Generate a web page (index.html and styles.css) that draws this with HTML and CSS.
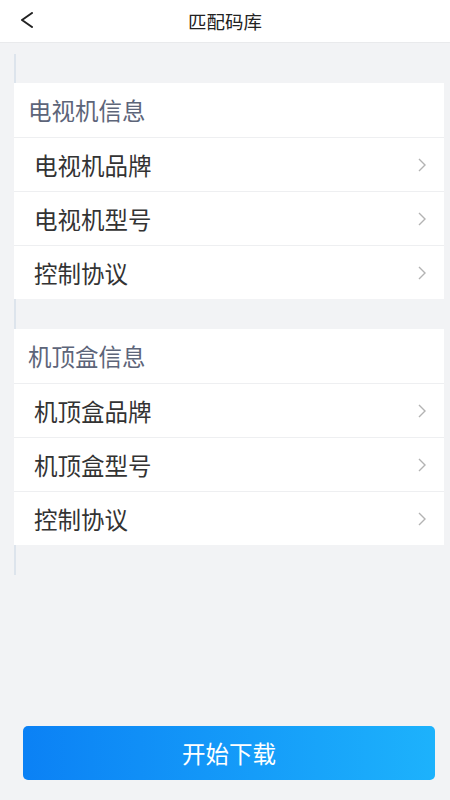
FILE: index.html
```html
<!DOCTYPE html>
<html lang="zh-CN">
  <head>
    <meta charset="UTF-8" />
    <meta name="viewport" content="width=device-width, initial-scale=1.0" />
    <title>匹配码库</title>
    <link rel="stylesheet" href="styles.css">
  </head>
  <body>
    <div class="page">
      <div class="topbar">
        <span class="back">
          <svg width="14" height="16" viewBox="0 0 14 16"><path d="M12 1 L2 8 L12 15" fill="none" stroke="#222" stroke-width="2" stroke-linecap="round" stroke-linejoin="round"/></svg>
        </span>
        <span class="title">匹配码库</span>
      </div>

      <div class="panel">
        <div class="card">
          <div class="card-head">电视机信息</div>
          <div class="row"><span>电视机品牌</span><svg class="arrow" width="10" height="14" viewBox="0 0 10 14"><path d="M2 1 L8 7 L2 13" fill="none" stroke="#b3b3b3" stroke-width="1.4"/></svg></div>
          <div class="row"><span>电视机型号</span><svg class="arrow" width="10" height="14" viewBox="0 0 10 14"><path d="M2 1 L8 7 L2 13" fill="none" stroke="#b3b3b3" stroke-width="1.4"/></svg></div>
          <div class="row"><span>控制协议</span><svg class="arrow" width="10" height="14" viewBox="0 0 10 14"><path d="M2 1 L8 7 L2 13" fill="none" stroke="#b3b3b3" stroke-width="1.4"/></svg></div>
        </div>

        <div class="card">
          <div class="card-head">机顶盒信息</div>
          <div class="row"><span>机顶盒品牌</span><svg class="arrow" width="10" height="14" viewBox="0 0 10 14"><path d="M2 1 L8 7 L2 13" fill="none" stroke="#b3b3b3" stroke-width="1.4"/></svg></div>
          <div class="row"><span>机顶盒型号</span><svg class="arrow" width="10" height="14" viewBox="0 0 10 14"><path d="M2 1 L8 7 L2 13" fill="none" stroke="#b3b3b3" stroke-width="1.4"/></svg></div>
          <div class="row"><span>控制协议</span><svg class="arrow" width="10" height="14" viewBox="0 0 10 14"><path d="M2 1 L8 7 L2 13" fill="none" stroke="#b3b3b3" stroke-width="1.4"/></svg></div>
        </div>
      </div>

      <div class="footer">
        <button class="start">开始下载</button>
      </div>
    </div>
  </body>
</html>
```

FILE: styles.css
```css
body {
  margin: 0;
  font-family: "Noto Sans CJK SC", "Noto Sans", sans-serif;
  background-color: #f2f3f5;
}
.page {
  display: flex;
  flex-direction: column;
  height: 100vh;
}
.topbar {
  height: 42px;
  background: white;
  border-bottom: 1px solid #e9eaec;
  display: flex;
  align-items: center;
  justify-content: center;
  position: relative;
}
.back {
  position: absolute;
  left: 20px;
  top: 12px;
  line-height: 0;
}
.title {
  font-size: 18.5px;
  color: #222;
}
.panel {
  margin: 11px 6px 0 14px;
  border-left: 2px solid #dde4ec;
  padding: 29px 0 30px;
}
.card {
  margin-left: -2px;
  background: white;
}
.card + .card {
  margin-top: 30px;
}
.card-head {
  height: 54px;
  display: flex;
  align-items: center;
  padding-left: 14px;
  font-size: 23.5px;
  color: #5d6579;
}
.row {
  height: 53px;
  border-top: 1px solid #eeeff1;
  display: flex;
  align-items: center;
  justify-content: space-between;
  padding: 0 17px 0 20px;
  font-size: 23.5px;
  color: #333;
}
.footer {
  margin-top: auto;
  padding: 0 15px 20px 23px;
}
.start {
  width: 100%;
  height: 54px;
  border: none;
  border-radius: 5px;
  background: linear-gradient(to right, #0b81f5, #1db2fc);
  color: white;
  font-family: inherit;
  font-size: 23.5px;
}
```
